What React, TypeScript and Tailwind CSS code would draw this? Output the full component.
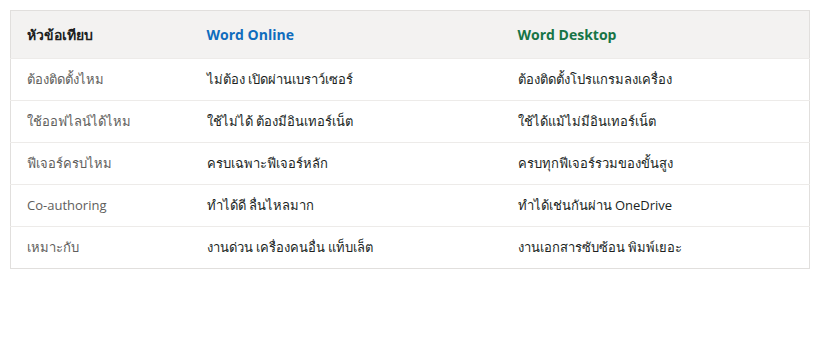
const rows = [
  ['ต้องติดตั้งไหม', 'ไม่ต้อง เปิดผ่านเบราว์เซอร์', 'ต้องติดตั้งโปรแกรมลงเครื่อง'],
  ['ใช้ออฟไลน์ได้ไหม', 'ใช้ไม่ได้ ต้องมีอินเทอร์เน็ต', 'ใช้ได้แม้ไม่มีอินเทอร์เน็ต'],
  ['ฟีเจอร์ครบไหม', 'ครบเฉพาะฟีเจอร์หลัก', 'ครบทุกฟีเจอร์รวมของขั้นสูง'],
  ['Co-authoring', 'ทำได้ดี ลื่นไหลมาก', 'ทำได้เช่นกันผ่าน OneDrive'],
  ['เหมาะกับ', 'งานด่วน เครื่องคนอื่น แท็บเล็ต', 'งานเอกสารซับซ้อน พิมพ์เยอะ'],
];

const App = () => {
  return (
    <div className="p-[10px] bg-white font-['Open_Sans','Noto_Sans',sans-serif] text-[13px]">
      <table className="w-[800px] border-collapse border border-[#e1dfdd]">
        <thead>
          <tr className="h-[48px] bg-[#f3f2f1] text-left text-[14px]">
            <th className="w-[180px] px-4 font-bold text-[#201f1e]">หัวข้อเทียบ</th>
            <th className="w-[311px] px-4 font-bold text-[#0f6cbd]">Word Online</th>
            <th className="px-4 font-bold text-[#167446]">Word Desktop</th>
          </tr>
        </thead>
        <tbody>
          {rows.map(([topic, online, desktop]) => (
            <tr key={topic} className="h-[42px] border-t border-[#edebe9]">
              <td className="px-4 text-[#605e5c]">{topic}</td>
              <td className="px-4 text-[#201f1e]">{online}</td>
              <td className="px-4 text-[#201f1e]">{desktop}</td>
            </tr>
          ))}
        </tbody>
      </table>
    </div>
  );
};

export default App;
